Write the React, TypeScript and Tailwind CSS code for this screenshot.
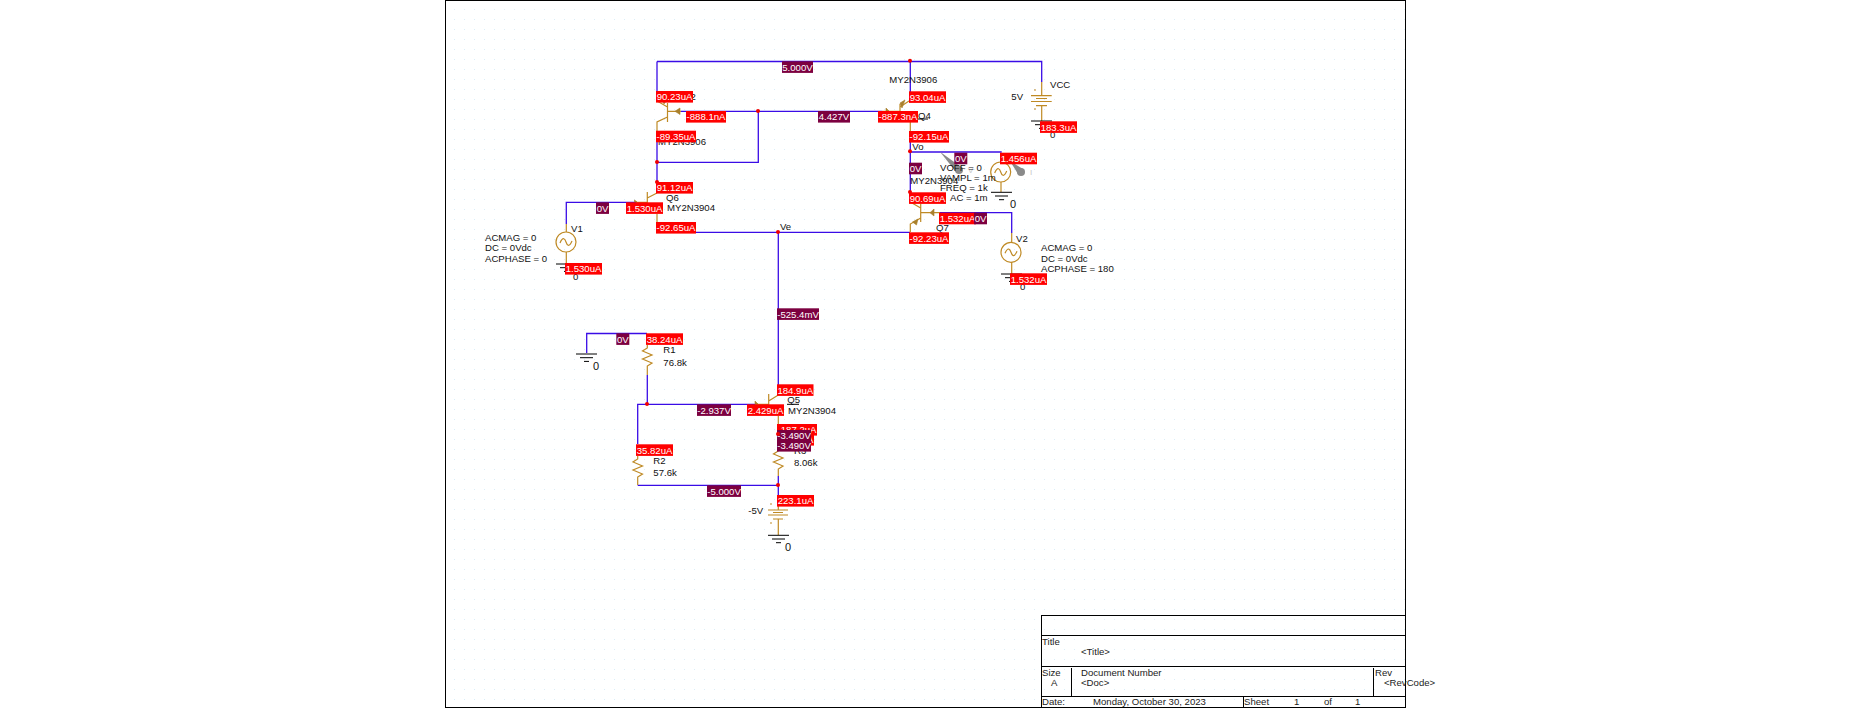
import React from "react";

const BLUE = "#3a0ce6";
const ORANGE = "#bf8a25";

// net wires
const wires = [
  "M657 61.5H1041.7V82",
  "M657 61.5V92",
  "M910.3 61.5V92",
  "M681 111.3H882",
  "M758.3 111.3V162.3H657",
  "M657 142V183",
  "M910.3 131V193",
  "M910.3 152H1001.7",
  "M566.3 224V202.3H636",
  "M939 212.7H1011.7V233",
  "M657 232.3H910",
  "M778.3 232.3V385",
  "M586.7 353V333.5H647",
  "M647.3 375V404.3",
  "M637.7 444V404.3H755",
  "M637.7 485.3H778.3",
  "M778.3 424V436",
  "M778.3 476V496",
];

// part bodies and leads
const parts = [
  // Q2
  "M667.5 103V122 M667.5 111.3H681 M667.5 107L657 101V92 M667.5 117L657 122V131",
  // Q4
  "M900 104V113 M882 111.3H900 M900 107L909 101 M900 113L910.3 118V132",
  // Q6
  "M647.3 192V212 M636 202.3H647.3 M647.3 198L657 193 M657 214V222",
  // Q7
  "M920.7 204V222 M920.7 212.7H940 M920.7 208L910.3 202 M920.7 218L910.3 224V232",
  // Q5
  "M768.7 394V412 M755 404.3H768.7 M768.7 401L778.3 395 M778.3 416V424",
  // V1, V2, VOFF leads
  "M566.3 224V232 M566.3 252V264",
  "M1011.7 233V242 M1011.7 262V274",
  "M1001 182V192",
  // R1, R2, R3 with zigzags
  "M647.3 345V348L642.5 351L652 355L642.5 359L652 363L647.3 366V375",
  "M637.7 456V459L633 462L642.5 466L633 470L642.5 474L637.7 477V485",
  "M778.3 448V451L773.5 454L783 458L773.5 462L783 466L778.3 469V476",
  // VCC
  "M1041.7 82V95.7 M1031 95.7H1051.7 M1036 98.5H1047 M1031 101.5H1051.7 M1036 105.7H1047 M1041.7 105.7V121",
  "M1034 90H1036 M1034 109H1036",
  // -5V
  "M778.3 506V510 M768 510H788 M773 512.5H783 M768 515H788 M773 519H783 M778.3 519V535",
  "M770 504H772 M770 523H772",
];

const arrows = [
  "M661 97L667 100L664 104Z",
  "M680 108V114.5L675 111.3Z",
  "M905 100L900 103L902 108Z",
  "M886 108L889 111H886Z",
  "M634.5 200L637 202H634.5Z",
  "M934 209V216L930 212.7Z",
  "M912.5 222L918 219L916.5 225Z",
  "M755 401L758 404H755Z",
];

const grounds: [number, number][] = [
  [556, 264],
  [1031, 121],
  [991, 192.3],
  [1001, 274],
  [576, 354],
  [768, 535.3],
];

const sources: [number, number][] = [
  [566, 242],
  [1000.7, 172],
  [1011, 252.3],
];

const dots: [number, number][] = [
  [758, 111],
  [657, 162],
  [657, 182],
  [778, 232],
  [910, 60.7],
  [910, 151.3],
  [910, 192],
  [647, 404],
  [778, 434],
  [778, 485],
];

const notes: [number, number, string][] = [
  [683, 96, "Q2"],
  [658, 141.5, "MY2N3906"],
  [666, 197.2, "Q6"],
  [667, 207.7, "MY2N3904"],
  [780, 226.7, "Ve"],
  [571, 228, "V1"],
  [485, 237.3, "ACMAG = 0"],
  [485, 247.7, "DC = 0Vdc"],
  [485, 258.3, "ACPHASE = 0"],
  [573, 276, "0"],
  [1050, 84.3, "VCC"],
  [1011.3, 96.7, "5V"],
  [889.3, 79.7, "MY2N3906"],
  [918, 115, "Q4"],
  [1050, 134, "0"],
  [912.3, 146.7, "Vo"],
  [910.3, 180, "MY2N3904"],
  [940, 167.3, "VOFF = 0"],
  [940, 177.7, "VAMPL = 1m"],
  [940, 187.7, "FREQ = 1k"],
  [950, 197.7, "AC = 1m"],
  [936, 227.3, "Q7"],
  [1016, 238.3, "V2"],
  [1041, 247.7, "ACMAG = 0"],
  [1041, 258.3, "DC = 0Vdc"],
  [1041, 268.7, "ACPHASE = 180"],
  [1020, 286.7, "0"],
  [663.3, 349, "R1"],
  [663.3, 362, "76.8k"],
  [653.3, 460.7, "R2"],
  [653.3, 472.7, "57.6k"],
  [787.3, 399.7, "Q5"],
  [788, 410, "MY2N3904"],
  [794, 450.7, "R3"],
  [794, 462.7, "8.06k"],
  [748.3, 510.7, "-5V"],
];

// the 0 net names on the free-standing grounds are drawn a bit larger
const netZeros: [number, number][] = [
  [1010, 204],
  [593, 366],
  [785, 547],
];

// bias point tags: x, y, width, text, voltage?
const tags: [number, number, number, string, boolean][] = [
  [782, 61.3, 31, "5.000V", true],
  [818, 111, 32, "4.427V", true],
  [596, 202.3, 13, "0V", true],
  [656, 91, 37, "90.23uA", false],
  [686, 111, 40, "-888.1nA", false],
  [656, 130.7, 40, "-89.35uA", false],
  [656, 182, 37, "91.12uA", false],
  [626, 202.3, 37, "1.530uA", false],
  [656, 222, 40, "-92.65uA", false],
  [565, 263, 37, "1.530uA", false],
  [909, 91.3, 37, "93.04uA", false],
  [878, 111, 40, "-887.3nA", false],
  [1040, 121.3, 37, "183.3uA", false],
  [909, 131, 40, "-92.15uA", false],
  [954.3, 152.7, 13, "0V", true],
  [909, 162.7, 13, "0V", true],
  [1000, 152.7, 37, "1.456uA", false],
  [909, 192.3, 37, "90.69uA", false],
  [939, 212.7, 37, "1.532uA", false],
  [974, 212.7, 13, "0V", true],
  [909, 232.3, 40, "-92.23uA", false],
  [1010, 273.3, 37, "1.532uA", false],
  [777, 308.3, 42, "-525.4mV", true],
  [616.3, 333.3, 13, "0V", true],
  [646, 333.3, 37, "38.24uA", false],
  [697, 404.3, 34, "-2.937V", true],
  [747, 404.3, 37, "2.429uA", false],
  [777, 384.3, 36.5, "184.9uA", false],
  [777, 424, 40, "-187.2uA", false],
  [777, 434, 37, "187.2uA", false],
  [777, 430, 34, "-3.490V", true],
  [777, 440, 34, "-3.490V", true],
  [636, 444.3, 37, "35.82uA", false],
  [707, 485.3, 34, "-5.000V", true],
  [777, 495, 37, "223.1uA", false],
];

function Schematic() {
  return (
    <svg
      width="1872"
      height="710"
      viewBox="0 0 1872 710"
      className="absolute left-0 top-0 font-['Liberation_Sans',sans-serif]"
    >
      <defs>
        <pattern id="snap" x="4" y="9" width="10" height="10" patternUnits="userSpaceOnUse">
          <rect width="1" height="1" fill="#d6effb" />
        </pattern>
      </defs>
      <rect x="446" y="1" width="959" height="706" fill="url(#snap)" />

      {wires.map((d, i) => (
        <path key={i} d={d} fill="none" stroke={BLUE} strokeWidth="1.3" />
      ))}
      {parts.map((d, i) => (
        <path key={i} d={d} fill="none" stroke={ORANGE} strokeWidth="1.2" />
      ))}
      {arrows.map((d, i) => (
        <path key={i} d={d} fill="#a9802c" stroke="#a9802c" strokeWidth="0.6" />
      ))}

      {sources.map(([x, y], i) => (
        <g key={i} fill="none" stroke={ORANGE} strokeWidth="1.2">
          <circle cx={x} cy={y} r="10" />
          <path d={`M${x - 6} ${y + 1}C${x - 3} ${y - 6} ${x - 1} ${y - 3} ${x} ${y}S${x + 3} ${y + 6} ${x + 6} ${y - 1}`} />
        </g>
      ))}

      {grounds.map(([x, y], i) => (
        <path
          key={i}
          d={`M${x} ${y}h21 M${x + 4} ${y + 3.7}h13 M${x + 8} ${y + 7.4}h5`}
          stroke="#000"
          strokeWidth="1"
          fill="none"
        />
      ))}

      {/* probe markers */}
      <path d="M940 151.7L956 172L961 167Z" fill="#8a8a8a" />
      <circle cx="959" cy="170" r="4" fill="#8a8a8a" />
      <path d="M1010 161L1018 174L1023 169Z" fill="#8a8a8a" />
      <circle cx="1021" cy="172" r="4" fill="#8a8a8a" />
      <text x="968" y="170" fontSize="8" fill="#c8c8c8" dominantBaseline="central">V</text>
      <text x="1030" y="172.7" fontSize="8" fill="#c8c8c8" dominantBaseline="central">I</text>

      {notes.map(([x, y, t], i) => (
        <text key={i} x={x} y={y} fontSize="9.6" fill="#111" dominantBaseline="central">
          {t}
        </text>
      ))}
      {netZeros.map(([x, y], i) => (
        <text key={i} x={x} y={y} fontSize="11" fill="#111" dominantBaseline="central">
          0
        </text>
      ))}
      <path d="M918 119H928 M787 404.3H799" stroke="#000" strokeWidth="1" />

      {dots.slice(0, 8).map(([x, y], i) => (
        <circle key={i} cx={x} cy={y} r="2" fill="#f00000" />
      ))}

      {tags.map(([x, y, w, t, volt], i) => (
        <g key={i}>
          <rect x={x} y={y} width={w} height="11.6" fill={volt ? "#7c0040" : "#ff0000"} />
          <text
            x={x + w / 2}
            y={y + 5.9}
            fontSize="9.6"
            fill="#fff"
            textAnchor="middle"
            dominantBaseline="central"
          >
            {t}
          </text>
        </g>
      ))}

      {dots.slice(8).map(([x, y], i) => (
        <circle key={i} cx={x} cy={y} r="2" fill="#f00000" />
      ))}
    </svg>
  );
}

function TitleBlock() {
  return (
    <div className="absolute right-0 bottom-0 w-[364px] border-l border-t border-black text-[9.6px] leading-[10px] text-[#222] whitespace-nowrap">
      <div className="h-[20px] border-b border-black" />
      <div className="h-[31px] border-b border-black pt-[1px]">
        <div>Title</div>
        <div className="ml-[39px]">&lt;Title&gt;</div>
      </div>
      <div className="flex h-[30px] border-b border-black pt-[1px]">
        <div className="w-[30px] border-r border-black">
          <div>Size</div>
          <div className="ml-[9px]">A</div>
        </div>
        <div className="flex-1 border-r border-black pl-[9px]">
          <div>Document Number</div>
          <div>&lt;Doc&gt;</div>
        </div>
        <div className="w-[31px] pl-[1px]">
          <div>Rev</div>
          <div className="ml-[9px]">&lt;RevCode&gt;</div>
        </div>
      </div>
      <div className="flex h-[10px]">
        <div className="flex w-[202px] border-r border-black">
          <div className="w-[51px]">Date:</div>
          <div>Monday, October 30, 2023</div>
        </div>
        <div className="w-[50px]">Sheet</div>
        <div className="w-[30px]">1</div>
        <div className="w-[31px]">of</div>
        <div>1</div>
      </div>
    </div>
  );
}

export default function App() {
  return (
    <div className="relative h-[710px] w-[1872px] overflow-hidden bg-white font-['Liberation_Sans',sans-serif]">
      <Schematic />
      <div className="relative ml-[445px] h-[708px] w-[961px] border border-black">
        <TitleBlock />
      </div>
    </div>
  );
}
